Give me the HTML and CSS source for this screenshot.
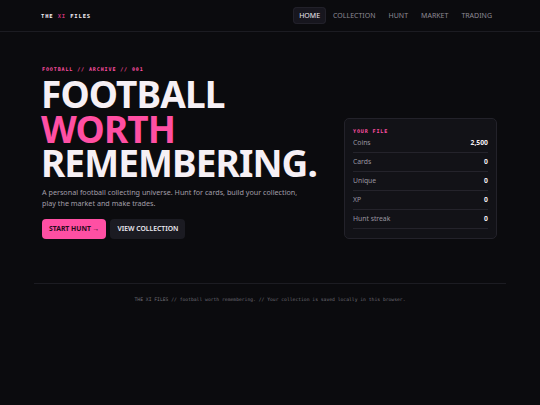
FILE: index.html
```html
<!DOCTYPE html>
<html>
  <head>
    <title>The XI Files</title>
    <link rel="stylesheet" href="styles.css">
  </head>
  <body>
    <header class="topbar">
      <div class="wrap topbar-inner">
        <div class="logo">THE <span class="pink">XI</span> FILES</div>
        <nav class="nav">
          <a class="nav-link active" href="#">HOME</a>
          <a class="nav-link" href="#">COLLECTION</a>
          <a class="nav-link" href="#">HUNT</a>
          <a class="nav-link" href="#">MARKET</a>
          <a class="nav-link" href="#">TRADING</a>
        </nav>
      </div>
    </header>

    <main class="wrap hero">
      <div class="hero-text">
        <div class="eyebrow">FOOTBALL // ARCHIVE // 001</div>
        <h1 class="headline">FOOTBALL<br><span class="pink">WORTH</span><br>REMEMBERING.</h1>
        <p class="lead">A personal football collecting universe. Hunt for cards, build your collection, play the market and make trades.</p>
        <div class="actions">
          <a class="btn btn-primary" href="#">START HUNT →</a>
          <a class="btn btn-dark" href="#">VIEW COLLECTION</a>
        </div>
      </div>

      <aside class="file-card">
        <div class="card-label">YOUR FILE</div>
        <div class="stat"><span>Coins</span><b>2,500</b></div>
        <div class="stat"><span>Cards</span><b>0</b></div>
        <div class="stat"><span>Unique</span><b>0</b></div>
        <div class="stat"><span>XP</span><b>0</b></div>
        <div class="stat"><span>Hunt streak</span><b>0</b></div>
      </aside>
    </main>

    <footer class="wrap footer">
      THE XI FILES // football worth remembering. // Your collection is saved locally in this browser.
    </footer>
  </body>
</html>
```

FILE: styles.css
```css
* {
  box-sizing: border-box;
}

body {
  margin: 0;
  background: #0b0b0e;
  color: #f3eef3;
  font-family: "Noto Sans", "Open Sans", sans-serif;
  height: 405px;
}

a {
  text-decoration: none;
  color: inherit;
}

.pink {
  color: #ff4fa3;
}

.wrap {
  width: 472px;
  margin: 0 auto;
}

.topbar {
  border-bottom: 1px solid #1c1c22;
  height: 32px;
}

.topbar-inner {
  height: 31px;
  display: flex;
  align-items: center;
  justify-content: space-between;
  padding: 0 8px 0 7px;
}

.logo {
  font-family: "DejaVu Sans Mono", monospace;
  font-weight: bold;
  font-size: 5.5px;
  letter-spacing: 0.85px;
  color: #f3eef3;
}

.logo .pink {
  color: #c8327a;
}

.nav {
  display: flex;
  gap: 1px;
}

.nav-link {
  font-size: 7px;
  color: #8d8a94;
  padding: 5px 6px;
  line-height: 7px;
  border-radius: 4px;
}

.nav-link.active {
  color: #ece9f0;
  background: #17161e;
  box-shadow: inset 0 0 0 1px #22212a;
}

.hero {
  display: flex;
  justify-content: space-between;
  align-items: flex-end;
  padding: 34px 9px 0 8px;
}

.hero-text {
  width: 290px;
}

.eyebrow {
  font-family: "DejaVu Sans Mono", monospace;
  font-weight: bold;
  font-size: 5px;
  letter-spacing: 0.9px;
  color: #ff4fa3;
  line-height: 7px;
}

.headline {
  margin: 4px 0 0 -1px;
  font-size: 37px;
  line-height: 34.5px;
  font-weight: 700;
  letter-spacing: -0.9px;
  color: #f6f0f5;
}

.lead {
  margin: 6px 0 0;
  max-width: 262px;
  font-size: 7.2px;
  line-height: 11.5px;
  color: #a29ea8;
}

.actions {
  display: flex;
  gap: 4px;
  margin-top: 9px;
}

.btn {
  font-size: 6.8px;
  font-weight: 600;
  height: 20px;
  line-height: 20px;
  padding: 0 7px;
  border-radius: 4px;
}

.btn-primary {
  background: #ff4fa3;
  color: #2a0a1a;
  font-weight: 700;
}

.btn-dark {
  background: #1b1b22;
  color: #ece9f0;
}

.file-card {
  width: 153px;
  background: #121217;
  border: 1px solid #23222a;
  border-radius: 5px;
  padding: 10px 8px 9px;
}

.card-label {
  font-family: "DejaVu Sans Mono", monospace;
  font-weight: bold;
  font-size: 5px;
  letter-spacing: 0.9px;
  color: #ff4fa3;
  line-height: 5px;
}

.stat {
  display: flex;
  justify-content: space-between;
  align-items: center;
  height: 19px;
  font-size: 6.8px;
  border-bottom: 1px solid #24232b;
  color: #9a96a1;
}

.stat b {
  color: #f3eef3;
  font-weight: 700;
}

.footer {
  margin-top: 44px;
  border-top: 1px solid #1c1c22;
  padding-top: 13px;
  text-align: center;
  font-family: "DejaVu Sans Mono", monospace;
  font-size: 4.7px;
  color: #6e6b75;
}
```
